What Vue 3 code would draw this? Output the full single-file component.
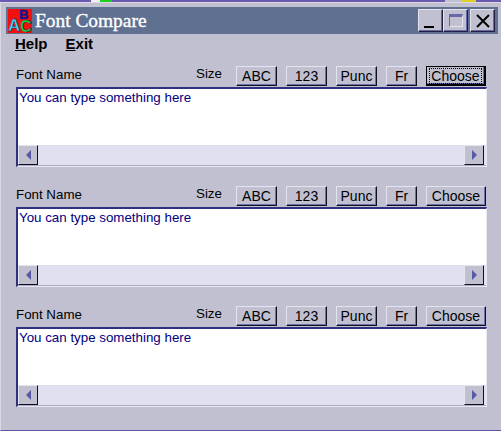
<script setup>
const panels = [
  { id: 1, focused: true },
  { id: 2, focused: false },
  { id: 3, focused: false }
]
const buttons = [
  { label: 'ABC', cls: 'b-abc' },
  { label: '123', cls: 'b-num' },
  { label: 'Punc', cls: 'b-punc' },
  { label: 'Fr', cls: 'b-fr' }
]
</script>

<template>
  <div class="screen">
    <div class="strip"></div>
    <div class="window">
      <div class="titlebar">
        <svg class="appicon" width="24" height="24" viewBox="0 0 24 24">
          <rect width="24" height="24" fill="#f01010" />
          <text x="11" y="10" class="ic ic-b">B</text>
          <text x="0" y="22" class="ic ic-a">A</text>
          <text x="12" y="23" class="ic ic-c">C</text>
        </svg>
        <span class="title">Font Compare</span>
        <div class="winbtns">
          <button class="winbtn"><span class="min"></span></button>
          <button class="winbtn"><span class="max"></span></button>
          <button class="winbtn close">
            <svg width="14" height="14" viewBox="0 0 14 14"><path d="M1 1l12 12M13 1L1 13" stroke="#000" stroke-width="2" /></svg>
          </button>
        </div>
      </div>
      <div class="menu">
        <span class="menuitem"><u>H</u>elp</span>
        <span class="menuitem"><u>E</u>xit</span>
      </div>
      <div v-for="p in panels" :key="p.id" class="panel">
        <div class="row">
          <span class="fname">Font Name</span>
          <span class="size">Size</span>
          <button v-for="b in buttons" :key="b.label" class="btn" :class="b.cls">{{ b.label }}</button>
          <button class="btn b-choose" :class="{ focused: p.focused }"><span>Choose</span></button>
        </div>
        <div class="box">
          <div class="text">You can type something here</div>
          <div class="scroll">
            <div class="arrow"><i class="tri left"></i></div>
            <div class="arrow"><i class="tri right"></i></div>
          </div>
        </div>
      </div>
    </div>
  </div>
</template>

<style scoped>
.screen {
  width: 501px;
  height: 431px;
  overflow: hidden;
  background: #c0c0d0;
  font-family: "Liberation Sans", Arial, sans-serif;
}
.strip {
  height: 2px;
  background: linear-gradient(90deg, #6a5ab0 0 91px, #f0f0f0 91px 100px, #20d020 100px 112px, #6a5ab0 112px 445px, #c0c0d0 445px 462px, #e0d020 462px 476px, #6a5ab0 476px);
}
.window {
  height: 429px;
  box-sizing: border-box;
  padding: 4px 3px 0 5px;
  background: #c0c0d0;
  border-top: 1px solid #d8d8e4;
  border-left: 1px solid #d8d8e4;
  border-bottom: 1px solid #5858a0;
}
.titlebar {
  height: 27px;
  background: #5f7090;
  display: flex;
  align-items: center;
  padding: 0 3px 0 2px;
}
.appicon {
  flex: none;
  overflow: visible;
}
.ic {
  font-family: "Liberation Sans", Arial, sans-serif;
  font-weight: bold;
  stroke: #101060;
  stroke-width: 0.5px;
}
.ic-b {
  font-size: 13px;
  fill: #1818a8;
}
.ic-a {
  font-size: 17px;
  fill: #40e8f0;
}
.ic-c {
  font-size: 16px;
  fill: #20e030;
}
.title {
  margin-left: 3px;
  font-family: "Liberation Serif", "Times New Roman", serif;
  font-size: 19.4px;
  color: #fff;
  -webkit-text-stroke: 0.35px #fff;
}
.winbtns {
  margin-left: auto;
  display: flex;
}
.winbtn {
  width: 25px;
  height: 23px;
  padding: 0;
  background: #c0c0d0;
  border: 1px solid;
  border-color: #e4e4ee #202040 #202040 #e4e4ee;
  box-shadow: inset -1px -1px 0 #6868a8;
  display: flex;
  align-items: center;
  justify-content: center;
  position: relative;
}
.winbtn.close {
  margin-left: 2px;
}
.min {
  position: absolute;
  left: 5px;
  bottom: 3px;
  width: 10px;
  height: 2px;
  background: #000;
}
.max {
  width: 12px;
  height: 9px;
  border: 1px solid #e4e4ee;
  border-top: 3px solid #6868a8;
  border-left-color: #6868a8;
}
.menu {
  height: 18px;
  display: flex;
  align-items: center;
  padding-left: 9px;
  gap: 18px;
  font-weight: bold;
  font-size: 15px;
  color: #000;
}
.panel {
  height: 120px;
  box-sizing: border-box;
  padding-left: 10px;
  padding-top: 14px;
}
.row {
  display: flex;
  align-items: flex-start;
  height: 21px;
  font-size: 13.33px;
}
.fname {
  width: 180px;
  line-height: 17px;
}
.size {
  width: 40px;
  line-height: 16px;
}
.btn {
  height: 20px;
  padding: 0;
  margin-right: 9px;
  font-family: inherit;
  font-size: 14px;
  color: #000;
  background: #c0c0d0;
  border: 1px solid;
  border-color: #e4e4ee #101020 #101020 #e4e4ee;
  box-shadow: inset -1px -1px 0 #7070a8;
}
.b-abc,
.b-num,
.b-punc {
  width: 41px;
}
.b-fr {
  width: 31px;
}
.b-choose {
  width: 60px;
  margin-right: 0;
  display: flex;
  align-items: center;
  justify-content: center;
}
.b-choose span {
  padding: 0 1px;
  border: 1px solid transparent;
  line-height: 14px;
}
.b-choose.focused {
  border: 2px solid #000;
  border-left-width: 1px;
  border-top-width: 1px;
}
.b-choose.focused span {
  border: 1px dotted #000;
}
.box {
  width: 471px;
  height: 80px;
  box-sizing: border-box;
  background: #fff;
  border: 1px solid;
  border-color: #303080 #e8e8f0 #e8e8f0 #303080;
  border-top-width: 2px;
  border-left-width: 2px;
  display: flex;
  flex-direction: column;
}
.text {
  flex: 1;
  font-size: 13.33px;
  color: #000080;
  padding-left: 1px;
  padding-top: 1px;
  line-height: 16px;
}
.scroll {
  height: 21px;
  box-sizing: border-box;
  background: #e0e0f0;
  border-bottom: 1px solid #a8a8c8;
  padding-right: 2px;
  display: flex;
  justify-content: space-between;
}
.arrow {
  width: 20px;
  height: 20px;
  box-sizing: border-box;
  background: #c0c0d0;
  border: 1px solid;
  border-color: #e4e4ee #101020 #101020 #e4e4ee;
  display: flex;
  align-items: center;
  justify-content: center;
}
.tri {
  width: 0;
  height: 0;
  border-top: 5px solid transparent;
  border-bottom: 5px solid transparent;
}
.tri.left {
  border-right: 5px solid #5858a8;
}
.tri.right {
  border-left: 5px solid #5858a8;
}
</style>
